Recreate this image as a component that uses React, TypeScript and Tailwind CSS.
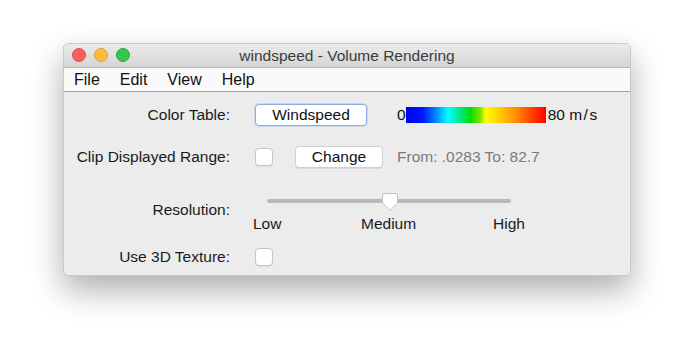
import React from "react";

const font = { fontFamily: '"Liberation Sans", Arial, sans-serif' };

function Light({ color, border }: { color: string; border: string }) {
  return <div className={`h-[14px] w-[14px] rounded-full border ${color} ${border}`} />;
}

function Checkbox() {
  return (
    <div className="h-[18px] w-[18px] rounded-[4px] border border-[#c4c4c4] bg-white shadow-[0_1px_0_rgba(0,0,0,0.06)]" />
  );
}

function Label({ children, className = "" }: { children: React.ReactNode; className?: string }) {
  return (
    <div className={`w-[166px] shrink-0 text-right text-[15.5px] leading-[18px] text-[#1a1a1a] ${className}`}>
      {children}
    </div>
  );
}

function Slider() {
  return (
    <div className="flex w-[272px] flex-col">
      {/* track + thumb */}
      <div className="relative h-[22px]">
        <div className="absolute left-[12px] top-[8px] h-[4px] w-[244px] rounded-full bg-[#b9b9b9]" />
        <svg className="absolute left-[126px] top-[1px]" width="18" height="20" viewBox="0 0 18 20">
          <path
            d="M3 1.5 H15 Q16.5 1.5 16.5 3 V11 L9 18.5 L1.5 11 V3 Q1.5 1.5 3 1.5 Z"
            fill="#ffffff"
            stroke="#c2c2c2"
            strokeWidth="1"
          />
        </svg>
      </div>
      <div className="relative h-[20px] text-[15.5px] leading-[18px] text-[#1a1a1a]">
        <span className="absolute left-[-2px] top-[2px]">Low</span>
        <span className="absolute left-[106px] top-[2px]">Medium</span>
        <span className="absolute left-[238px] top-[2px]">High</span>
      </div>
    </div>
  );
}

export default function App() {
  return (
    <div className="h-[360px] w-[694px] bg-white" style={font}>
      <div className="pl-[63px] pt-[43px]">
        <div className="h-[233px] w-[568px] overflow-hidden rounded-[5px] border border-[#c9c9c9] bg-[#ececec] shadow-[0_14px_32px_rgba(0,0,0,0.32)]">
          {/* title bar */}
          <div className="relative flex h-[24px] items-center border-b border-[#b4b4b4] bg-gradient-to-b from-[#ebebeb] to-[#d5d5d5]">
            <div className="absolute left-[8px] top-[4px] flex gap-[8px]">
              <Light color="bg-[#fc605c]" border="border-[#de4a45]" />
              <Light color="bg-[#fdbc40]" border="border-[#de9f34]" />
              <Light color="bg-[#34c84a]" border="border-[#27aa35]" />
            </div>
            <div className="w-full text-center text-[15.5px] leading-[18px] text-[#3c3c3c]">
              windspeed - Volume Rendering
            </div>
          </div>
          {/* menu bar */}
          <div className="flex h-[24px] items-center gap-[20px] border-b border-[#9c9c9c] bg-[#fafafa] pl-[10px] text-[16px] text-[#111]">
            <span>File</span>
            <span>Edit</span>
            <span>View</span>
            <span>Help</span>
          </div>
          {/* content */}
          <div className="flex flex-col pt-[10px]">
            <div className="flex h-[26px] items-center">
              <Label>Color Table:</Label>
              <div className="ml-[25px] flex h-[22px] w-[112px] items-center justify-center rounded-[4px] border border-[#86b0e6] bg-white text-[15.5px] text-[#111] shadow-[0_0_0_1px_rgba(140,180,235,0.35)]">
                Windspeed
              </div>
              <div className="ml-[30px] flex items-center text-[15.5px] text-[#111]">
                <span>0</span>
                <div className="h-[16px] w-[140px] bg-[linear-gradient(to_right,#0000f0_0%,#0018ff_12%,#0090ff_22%,#00ffff_30%,#00e890_38%,#00e000_46%,#80e000_53%,#ffff00_57%,#ffd000_66%,#ff9000_78%,#ff4000_90%,#ff0000_100%)]" />
                <span className="ml-[2px]">
                  80 <span className="tracking-[1.5px]">m/s</span>
                </span>
              </div>
            </div>
            <div className="mt-[16px] flex h-[26px] items-center">
              <Label>Clip Displayed Range:</Label>
              <div className="ml-[25px]">
                <Checkbox />
              </div>
              <div className="ml-[22px] flex h-[22px] w-[88px] items-center justify-center rounded-[4px] border border-[#cfcfcf] bg-white text-[15.5px] text-[#111] shadow-[0_1px_0_rgba(0,0,0,0.08)]">
                Change
              </div>
              <span className="ml-[14px] text-[15.5px] text-[#7a7a7a]">From: .0283 To: 82.7</span>
            </div>
            <div className="mt-[21px] flex items-start">
              <Label className="mt-[10px]">Resolution:</Label>
              <div className="ml-[25px]">
                <Slider />
              </div>
            </div>
            <div className="mt-[11px] flex h-[26px] items-center">
              <Label>Use 3D Texture:</Label>
              <div className="ml-[25px]">
                <Checkbox />
              </div>
            </div>
          </div>
        </div>
      </div>
    </div>
  );
}
